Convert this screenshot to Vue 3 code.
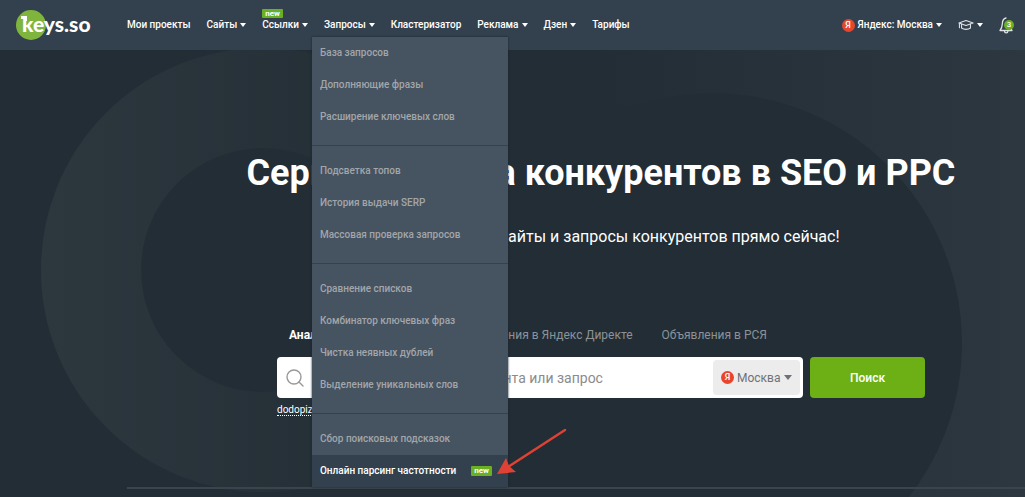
<script setup>
import { ref } from 'vue'

const query = ref('')
const region = ref('Москва')

const links = [
  { label: 'Мои проекты' },
  { label: 'Сайты', menu: true },
  { label: 'Ссылки', menu: true, isNew: true },
  { label: 'Запросы', menu: true, open: true },
  { label: 'Кластеризатор' },
  { label: 'Реклама', menu: true },
  { label: 'Дзен', menu: true },
  { label: 'Тарифы' },
]

const groups = [
  ['База запросов', 'Дополняющие фразы', 'Расширение ключевых слов'],
  ['Подсветка топов', 'История выдачи SERP', 'Массовая проверка запросов'],
  ['Сравнение списков', 'Комбинатор ключевых фраз', 'Чистка неявных дублей', 'Выделение уникальных слов'],
  ['Сбор поисковых подсказок', 'Онлайн парсинг частотности'],
]
const activeItem = 'Онлайн парсинг частотности'

const tabs = ['Анализ сайта и запросов', 'Объявления в Яндекс Директе', 'Объявления в РСЯ']
</script>

<template>
  <div class="page">
    <svg class="rings" width="1025" height="447" viewBox="0 50 1025 447" aria-hidden="true">
      <defs>
        <linearGradient id="ringLeft" gradientUnits="userSpaceOnUse" x1="41" y1="0" x2="420" y2="0">
          <stop offset="0" stop-color="#2c373e" />
          <stop offset="1" stop-color="#2c373e" stop-opacity="0" />
        </linearGradient>
        <linearGradient id="ringRight" gradientUnits="userSpaceOnUse" x1="1025" y1="0" x2="600" y2="0">
          <stop offset="0" stop-color="#2d373f" />
          <stop offset="1" stop-color="#2d373f" stop-opacity="0" />
        </linearGradient>
      </defs>
      <circle cx="263" cy="270" r="172" fill="none" stroke="url(#ringLeft)" stroke-width="100" />
      <circle cx="712" cy="343" r="370" fill="none" stroke="url(#ringRight)" stroke-width="240" />
    </svg>

    <header class="header">
      <a class="logo" href="#" aria-label="keys.so">
        <span class="logo-text">keys.so</span>
        <svg class="logo-key" width="6" height="6" viewBox="0 0 6 6" aria-hidden="true">
          <path d="M0 0H6V5H3V3H0Z" fill="#fff" />
        </svg>
      </a>
      <nav class="nav">
        <div v-for="link in links" :key="link.label" class="nav-item">
          <span v-if="link.isNew" class="badge nav-badge">new</span>
          <button v-if="link.menu" type="button" class="nav-link" :aria-expanded="!!link.open">
            {{ link.label }}<span class="caret"></span>
          </button>
          <a v-else class="nav-link" href="#">{{ link.label }}</a>
          <div v-if="link.open" class="dropdown">
            <ul v-for="(group, i) in groups" :key="i" class="group">
              <li v-for="item in group" :key="item">
                <a href="#" class="menu-link" :class="{ active: item === activeItem }">
                  {{ item }}<span v-if="item === activeItem" class="badge">new</span>
                </a>
              </li>
            </ul>
            <svg class="arrow" width="72" height="48" viewBox="0 0 72 48" aria-hidden="true">
              <path d="M69 2L12 39" stroke="#df4235" stroke-width="2.4" stroke-linecap="round" />
              <path d="M1 46L10 30L13 38L20 44Z" fill="#df4235" />
            </svg>
          </div>
        </div>
      </nav>
      <div class="tools">
        <button type="button" class="nav-link">
          <span class="ya">Я</span>Яндекс: Москва<span class="caret"></span>
        </button>
        <button type="button" class="nav-link" aria-label="Обучение">
          <svg width="16" height="12" viewBox="0 0 18 12" fill="none" stroke="#dfe3e6" stroke-width="1.2" stroke-linejoin="round" stroke-linecap="round" aria-hidden="true">
            <path d="M1 3.8L9 1L17 3.8L9 6.6Z" />
            <path d="M4 5V9.4C6.6 11.4 11.4 11.4 14 9.4V5M1.6 4.4V9" />
          </svg>
          <span class="caret"></span>
        </button>
        <button type="button" class="nav-link bell" aria-label="Уведомления: 3">
          <svg width="15" height="17" viewBox="0 0 15 17" fill="none" stroke="#dfe3e6" stroke-width="1.3" stroke-linejoin="round" stroke-linecap="round" aria-hidden="true">
            <path d="M7 1C4.2 1.6 3.4 4 3.3 7C3.2 9.8 2.6 11.5 1 13.5H13C11.6 11.8 11.2 10.5 11 9M5.4 14C5.6 16.6 8.8 16.6 9 14" />
          </svg>
          <span class="count">3</span>
        </button>
      </div>
    </header>

    <main class="main">
      <h1 class="title">Сервис анализа конкурентов в SEO и PPC</h1>
      <p class="subtitle">Проанализируйте сайты и запросы конкурентов прямо сейчас!</p>
      <div class="search">
        <div class="tabs" role="tablist">
          <button v-for="(tab, i) in tabs" :key="tab" type="button" role="tab" class="tab" :class="{ current: i === 0 }" :aria-selected="i === 0">{{ tab }}</button>
        </div>
        <form class="form" @submit.prevent>
          <div class="box">
            <svg width="18" height="18" viewBox="0 0 18 18" fill="none" stroke="#999" stroke-width="1.4" stroke-linecap="round" aria-hidden="true">
              <circle cx="8" cy="8" r="7" />
              <path d="M13 13L17 17" />
            </svg>
            <input v-model="query" class="query" type="text" aria-label="Поисковый запрос" placeholder="Введите домен, URL документа или запрос" />
            <label class="region">
              <span class="ya">Я</span>
              <select v-model="region" class="select" aria-label="Регион">
                <option>Москва</option>
              </select>
              <span class="caret"></span>
            </label>
          </div>
          <button type="submit" class="submit">Поиск</button>
        </form>
        <a class="sample" href="#">dodopizza.ru</a>
      </div>
    </main>
    <hr class="rule" />
  </div>
</template>

<style>
body {
  margin: 0;
  background: #232d35;
}
</style>

<style scoped>
.page {
  position: relative;
  display: flex;
  flex-direction: column;
  box-sizing: border-box;
  min-height: 100vh;
  overflow: hidden;
  background: #232d35;
  color: #fff;
  font-family: Roboto, "Noto Sans", sans-serif;
  font-size: 10px;
}
button, input, select {
  font: inherit;
  color: inherit;
  margin: 0;
  padding: 0;
  border: 0;
  background: none;
}
.rings {
  position: absolute;
  top: 50px;
  left: 0;
}
.header {
  position: relative;
  z-index: 2;
  display: flex;
  align-items: center;
  height: 50px;
  box-sizing: border-box;
  padding: 0 11px 0 16px;
  background: #33404d;
}
.logo {
  position: relative;
  flex: none;
  display: flex;
  align-items: center;
  width: 111px;
  height: 30px;
  color: #fff;
  text-decoration: none;
}
.logo::before {
  content: "";
  position: absolute;
  left: 0;
  top: 0;
  width: 30px;
  height: 30px;
  border-radius: 50%;
  background: #7fb53d;
}
.logo-text {
  position: relative;
  padding: 0 0 2px 6px;
  font: 900 21px/26px Lato, sans-serif;
}
.logo-key {
  position: absolute;
  left: 5px;
  top: 6px;
}
.nav {
  display: flex;
  gap: 16px;
}
.nav-item {
  position: relative;
}
.nav-link {
  display: flex;
  align-items: center;
  line-height: 24px;
  color: #fff;
  font-weight: 500;
  text-decoration: none;
  white-space: nowrap;
}
.caret {
  flex: none;
  margin-left: 3px;
  border: 3px solid transparent;
  border-top: 4px solid currentColor;
  border-bottom: 0;
}
.badge {
  padding: 0 3px;
  border-radius: 1px;
  background: #6ab023;
  color: #fff;
  font-size: 8px;
  font-weight: 700;
  line-height: 9px;
}
.nav-badge {
  position: absolute;
  left: 0;
  top: -4px;
}
.dropdown {
  position: absolute;
  left: -12px;
  top: 24px;
  width: 196px;
  background: #465360;
  box-shadow: 0 0 2px #1b242b;
}
.group {
  margin: 0;
  padding: 9px 0 12px;
  list-style: none;
  border-top: 1px solid #35424e;
}
.group:first-child {
  padding-top: 0;
  border-top: 0;
}
.group:last-of-type {
  padding-bottom: 0;
}
.menu-link {
  display: flex;
  align-items: center;
  justify-content: space-between;
  padding: 0 16px 0 8px;
  line-height: 32px;
  color: #a2a6aa;
  font-weight: 500;
  text-decoration: none;
  white-space: nowrap;
}
.menu-link.active {
  background: #33404d;
  color: #fff;
}
.menu-link .badge {
  line-height: 10px;
}
.arrow {
  position: absolute;
  left: 184px;
  bottom: 11px;
  fill: none;
}
.tools {
  display: flex;
  align-items: center;
  gap: 16px;
  margin-left: auto;
}
.ya {
  flex: none;
  width: 13px;
  height: 13px;
  margin-right: 3px;
  border-radius: 50%;
  background: #e8452c;
  color: #fff;
  font-size: 9px;
  font-weight: 500;
  line-height: 13px;
  text-align: center;
}
.bell {
  position: relative;
}
.count {
  position: absolute;
  right: 0;
  top: 3px;
  width: 10px;
  height: 10px;
  border-radius: 50%;
  background: #6ab023;
  font-size: 8px;
  line-height: 10px;
  text-align: center;
}
.main {
  position: relative;
  display: flex;
  flex-direction: column;
  align-items: center;
  flex: 1;
  padding: 99px 0 0 177px;
}
.title {
  margin: 0;
  font-size: 36px;
  font-weight: 700;
  line-height: 48px;
  white-space: nowrap;
}
.subtitle {
  margin: 28px 0 0;
  font-size: 16px;
  line-height: 24px;
  white-space: nowrap;
}
.search {
  width: 648px;
  max-width: 100%;
  margin-top: 74px;
}
.tabs {
  display: flex;
  gap: 29px;
  padding-left: 12px;
}
.tab {
  color: #8c9398;
  font-size: 12px;
  line-height: 24px;
  white-space: nowrap;
}
.tab.current {
  color: #fff;
  font-weight: 700;
}
.form {
  display: flex;
  gap: 7px;
  margin-top: 10px;
}
.box {
  display: flex;
  align-items: center;
  flex: 1;
  height: 41px;
  box-sizing: border-box;
  padding: 3px 3px 3px 9px;
  border-radius: 4px;
  background: #fff;
}
.query {
  flex: 1;
  min-width: 0;
  padding-left: 16px;
  color: #333;
  font-size: 14px;
  outline: 0;
}
.query::placeholder {
  color: #8b8b8b;
  opacity: 1;
}
.region {
  display: flex;
  align-items: center;
  box-sizing: border-box;
  width: 87px;
  height: 35px;
  padding: 0 8px;
  border-radius: 4px;
  background: #ececec;
  color: #6d7278;
}
.select {
  flex: 1;
  min-width: 0;
  appearance: none;
  font-size: 12px;
}
.region .caret {
  border-width: 5px 4px 0;
}
.submit {
  width: 115px;
  border-radius: 4px;
  background: #6cb016;
  font-size: 12px;
  font-weight: 500;
}
.sample {
  display: inline-block;
  margin-top: 7px;
  border-bottom: 1px dotted #fff;
  color: #fff;
  font-size: 10px;
  line-height: 10px;
  text-decoration: none;
}
.rule {
  position: relative;
  width: auto;
  margin: 0 0 8px 127px;
  border: 0;
  border-top: 2px solid #3b444b;
}
</style>
